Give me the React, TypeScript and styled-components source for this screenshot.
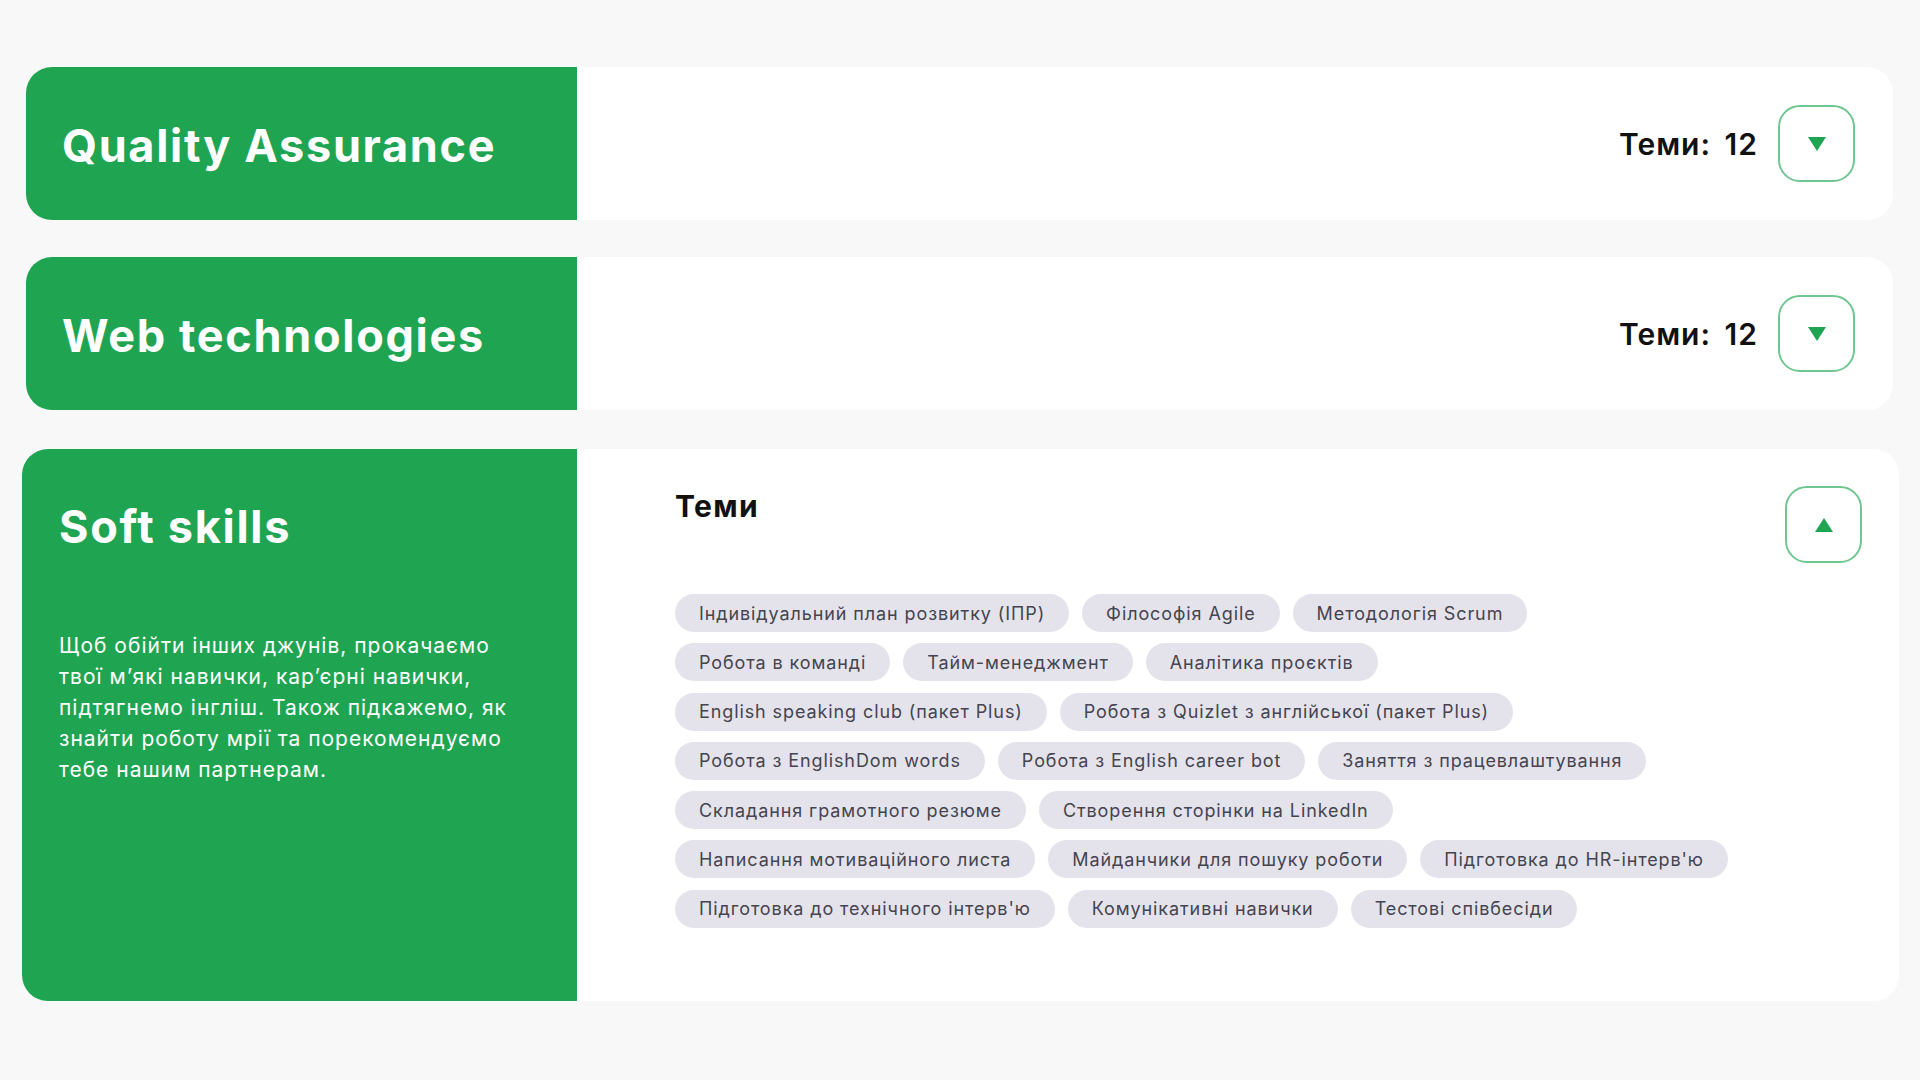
import React from "react";
import styled, { createGlobalStyle } from "styled-components";

const GREEN = "#1fa552";

const GlobalStyle = createGlobalStyle`
  body {
    margin: 0;
    background: #f8f8f8;
    font-family: Inter, "Noto Sans", sans-serif;
  }
`;

const Page = styled.main`
  display: flex;
  flex-direction: column;
  gap: 37px;
  padding: 67px 27px 78px 26px;
`;

const Card = styled.section<{ $open?: boolean }>`
  display: grid;
  grid-template-columns: ${(p) => (p.$open ? "555px" : "551px")} 1fr;
  min-height: 153px;
  margin: ${(p) => (p.$open ? "2px -6px 0 -4px" : "0")};
  border-radius: 26px;
  background: #fff;
  overflow: hidden;
`;

const Side = styled.div<{ $open?: boolean }>`
  display: flex;
  flex-direction: column;
  justify-content: ${(p) => (p.$open ? "flex-start" : "center")};
  padding: ${(p) => (p.$open ? "51px 37px 33px" : "4px 36px 0")};
  background: ${GREEN};
  color: #fff;
`;

const Title = styled.h2`
  margin: 0;
  font-size: 45px;
  line-height: 54px;
  font-weight: 700;
  letter-spacing: 1.7px;
`;

const Description = styled.p`
  margin: 76px 0 0;
  font-size: 21px;
  line-height: 31px;
  font-weight: 400;
  letter-spacing: 1px;
`;

const Summary = styled.div`
  display: flex;
  align-items: center;
  justify-content: flex-end;
  gap: 20px;
  padding-right: 38px;
`;

const Count = styled.span`
  font-size: 30px;
  font-weight: 600;
  color: #111;
  letter-spacing: 1px;
  word-spacing: 5px;
`;

const Toggle = styled.button`
  display: flex;
  align-items: center;
  justify-content: center;
  width: 77px;
  height: 77px;
  padding: 0;
  border: 2px solid #70c690;
  border-radius: 22px;
  background: #fff;
  cursor: pointer;
`;

const Body = styled.div`
  display: grid;
  grid-template-columns: 1fr auto;
  align-items: start;
  padding: 37px 37px 73px 98px;
`;

const Topics = styled.div`
  display: flex;
  flex-direction: column;
`;

const TopicsTitle = styled.h3`
  margin: 0;
  padding-top: 2px;
  font-size: 30px;
  line-height: 36px;
  font-weight: 700;
  letter-spacing: 1.4px;
  color: #111;
`;

const TagRows = styled.div`
  display: flex;
  flex-direction: column;
  gap: 11.3px;
  margin-top: 70px;
`;

const TagRow = styled.div`
  display: flex;
  gap: 13px;
`;

const Tag = styled.span`
  display: inline-flex;
  align-items: center;
  height: 38px;
  padding: 0 24px;
  border-radius: 19px;
  background: #e4e3ec;
  color: #45444f;
  font-size: 18px;
  letter-spacing: 0.9px;
  white-space: nowrap;
`;

const Arrow = ({ up }: { up?: boolean }) => (
  <svg width="18" height="14" viewBox="0 0 18 14">
    <polygon
      points={up ? "9,0 18,14 0,14" : "0,0 18,0 9,14"}
      fill={GREEN}
    />
  </svg>
);

const softRows = [
  ["Індивідуальний план розвитку (ІПР)", "Філософія Agile", "Методологія Scrum"],
  ["Робота в команді", "Тайм-менеджмент", "Аналітика проєктів"],
  ["English speaking club (пакет Plus)", "Робота з Quizlet з англійської (пакет Plus)"],
  ["Робота з EnglishDom words", "Робота з English career bot", "Заняття з працевлаштування"],
  ["Складання грамотного резюме", "Створення сторінки на LinkedIn"],
  ["Написання мотиваційного листа", "Майданчики для пошуку роботи", "Підготовка до HR-інтерв'ю"],
  ["Підготовка до технічного інтерв'ю", "Комунікативні навички", "Тестові співбесіди"],
];

const ClosedCard = ({ title, count }: { title: string; count: number }) => (
  <Card>
    <Side>
      <Title>{title}</Title>
    </Side>
    <Summary>
      <Count>Теми: {count}</Count>
      <Toggle aria-label="Відкрити">
        <Arrow />
      </Toggle>
    </Summary>
  </Card>
);

export default function App() {
  return (
    <>
      <GlobalStyle />
      <Page>
        <ClosedCard title="Quality Assurance" count={12} />
        <ClosedCard title="Web technologies" count={12} />
        <Card $open>
          <Side $open>
            <Title>Soft skills</Title>
            <Description>
              Щоб обійти інших джунів, прокачаємо
              <br />
              твої м’які навички, кар’єрні навички,
              <br />
              підтягнемо інгліш. Також підкажемо, як
              <br />
              знайти роботу мрії та порекомендуємо
              <br />
              тебе нашим партнерам.
            </Description>
          </Side>
          <Body>
            <Topics>
              <TopicsTitle>Теми</TopicsTitle>
              <TagRows>
                {softRows.map((row) => (
                  <TagRow key={row[0]}>
                    {row.map((t) => (
                      <Tag key={t}>{t}</Tag>
                    ))}
                  </TagRow>
                ))}
              </TagRows>
            </Topics>
            <Toggle aria-label="Закрити">
              <Arrow up />
            </Toggle>
          </Body>
        </Card>
      </Page>
    </>
  );
}
